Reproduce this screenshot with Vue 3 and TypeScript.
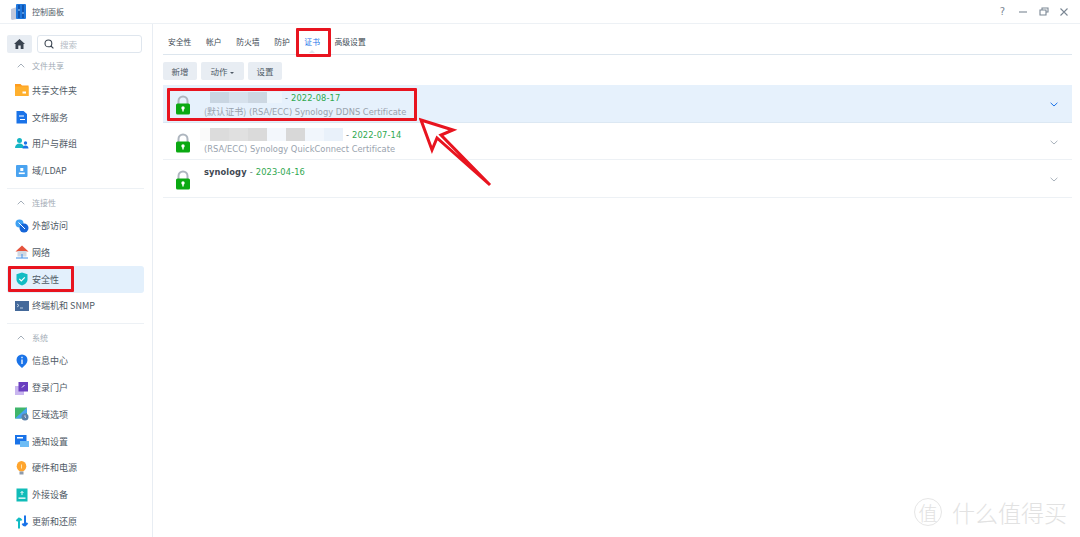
<script setup lang="ts">
type Item = { label: string; icon: string; active?: boolean }
type Group = { title: string; items: Item[] }
const groups: Group[] = [
  { title: '文件共享', items: [
    { label: '共享文件夹', icon: 'folder' }, { label: '文件服务', icon: 'file' },
    { label: '用户与群组', icon: 'users' }, { label: '域/LDAP', icon: 'ldap' } ] },
  { title: '连接性', items: [
    { label: '外部访问', icon: 'ext' }, { label: '网络', icon: 'net' },
    { label: '安全性', icon: 'shield', active: true }, { label: '终端机和 SNMP', icon: 'term' } ] },
  { title: '系统', items: [
    { label: '信息中心', icon: 'info' }, { label: '登录门户', icon: 'portal' },
    { label: '区域选项', icon: 'region' }, { label: '通知设置', icon: 'notify' },
    { label: '硬件和电源', icon: 'bulb' }, { label: '外接设备', icon: 'device' },
    { label: '更新和还原', icon: 'update' } ] },
]
const tabs = ['安全性', '帐户', '防火墙', '防护', '证书', '高级设置']
type Block = { w: number; c: string }
type Cert = { name?: string; date: string; tag?: string; sub?: string; blocks?: Block[]; active?: boolean }
const certs: Cert[] = [
  { date: '2022-08-17', tag: '(默认证书)', sub: ' (RSA/ECC) Synology DDNS Certificate', active: true,
    blocks: [{ w: 19, c: '#c9d6e2' }, { w: 19, c: '#d6e1ec' }, { w: 19, c: '#ccd7e2' }, { w: 15, c: '#edf5fc' }] },
  { date: '2022-07-14', sub: '(RSA/ECC) Synology QuickConnect Certificate',
    blocks: [{ w: 10, c: '#fafafa' }, { w: 19, c: '#dcdcdc' }, { w: 19, c: '#e0e0e0' }, { w: 19, c: '#dadada' }, { w: 19, c: '#f3f7fc' }, { w: 19, c: '#d8d8d8' }, { w: 19, c: '#f1f6fc' }, { w: 19, c: '#e9f1fa' }] },
  { name: 'synology', date: '2023-04-16' },
]
</script>

<template>
  <div class="app">
    <header class="titlebar">
      <div class="title">
        <svg class="logo" width="15" height="16" viewBox="0 0 15 16">
          <path d="M0 5l6-2v12l-5 1-1-1z" fill="#c3c9dc" />
          <rect x="5" y="0" width="10" height="15" rx="1" fill="#1f78de" />
          <path d="M8 1v13M12 1v13" stroke="#0e4ea8" stroke-width="1.6" />
          <path d="M7 6h2M11 9h2" stroke="#9fd4ff" stroke-width="1.2" />
        </svg>
        <span>控制面板</span>
      </div>
      <div class="winbtns">
        <span class="help">?</span>
        <svg width="10" height="10" viewBox="0 0 10 10"><path d="M1 5h8" stroke="#7b8794" stroke-width="1.1" /></svg>
        <svg width="10" height="10" viewBox="0 0 10 10"><path d="M3 3V1h6v4H7M1 3h6v5H1z" fill="none" stroke="#7b8794" stroke-width="1.1" /></svg>
        <svg width="10" height="10" viewBox="0 0 10 10"><path d="M1.5 1.500l7 7M8.500 1.500l-7 7" stroke="#7b8794" stroke-width="1.1" /></svg>
      </div>
    </header>

    <div class="body">
      <aside class="sidebar">
        <div class="searchrow">
          <div class="home">
            <svg width="11" height="10" viewBox="0 0 11 10"><path d="M5.500 0L11 5H9.500v5H6.700V6.600H4.300V10H1.500V5H0z" fill="#39434f" /></svg>
          </div>
          <div class="search">
            <svg width="10" height="10" viewBox="0 0 10 10"><circle cx="4.400" cy="4.400" r="3.400" fill="none" stroke="#39434f" stroke-width="1.100" /><path d="M7 7l2.400 2.400" stroke="#39434f" stroke-width="1.100" /></svg>
            <span>搜索</span>
          </div>
        </div>

        <section v-for="(g, gi) in groups" :key="g.title" class="group" :class="{ ruled: gi > 0 }">
          <div class="ghead">
            <svg width="8" height="5" viewBox="0 0 8 5"><path d="M.7 4.300L4 1l3.300 3.300" fill="none" stroke="#9aa5b1" stroke-width="0.900" /></svg>
            <span>{{ g.title }}</span>
          </div>
          <div v-for="it in g.items" :key="it.label" class="item" :class="{ active: it.active }">
            <svg class="ico" width="14" height="14" viewBox="0 0 14 14">
              <template v-if="it.icon === 'folder'">
                <path d="M0 1h5.500L7 2.500h6.500V13H0z" fill="#ff9d1e" /><path d="M0 3.500h13.500V13H0z" fill="#ffb02e" /><rect x="7.500" y="8.500" width="3.500" height="2" fill="#fff" />
              </template>
              <template v-else-if="it.icon === 'file'">
                <path d="M1.500 1h7L12 4v9.500H1.500z" fill="#1a73e8" /><path d="M4 6h5M5 9.500h5" stroke="#fff" stroke-width="1.200" />
              </template>
              <template v-else-if="it.icon === 'users'">
                <circle cx="4.500" cy="3.500" r="2.500" fill="#15b5c4" /><path d="M0 11c0-3 2-4.500 4.500-4.500S9 8 9 11z" fill="#15b5c4" /><circle cx="10.500" cy="6" r="1.700" fill="#1a73e8" /><path d="M7.500 11.500c0-2 1.300-3 3-3s3 1 3 3z" fill="#1a73e8" />
              </template>
              <template v-else-if="it.icon === 'ldap'">
                <rect x="1" y="1" width="11.500" height="12" rx="1" fill="#4aa3f0" /><rect x="5.300" y="4" width="3" height="3" fill="#fff" /><rect x="3.800" y="8.500" width="6" height="1.600" fill="#fff" />
              </template>
              <template v-else-if="it.icon === 'ext'">
                <circle cx="4.500" cy="4.500" r="4" fill="#3fa0f2" /><circle cx="9" cy="9" r="4.500" fill="#1565d8" /><path d="M3.500 3.500l6.500 6.500" stroke="#fff" stroke-width="1" />
              </template>
              <template v-else-if="it.icon === 'net'">
                <path d="M7 .5L13.500 6.500H.5z" fill="#e5533d" /><rect x="2.500" y="6" width="9" height="5.500" fill="#cfd8e3" /><path d="M1 13h12M7 9v4" stroke="#3f8ee8" stroke-width="1" />
              </template>
              <template v-else-if="it.icon === 'shield'">
                <path d="M7 .5l5.500 1.800v5c0 3.200-2.500 5.200-5.500 6.200-3-1-5.500-3-5.500-6.200v-5z" fill="#12bcc4" /><path d="M4.300 6.800l2 2 3.500-3.500" fill="none" stroke="#fff" stroke-width="1.200" />
              </template>
              <template v-else-if="it.icon === 'term'">
                <rect x="0" y="2" width="14" height="10" fill="#44699a" /><path d="M2 5l2 1.500L2 8M5 9h3" fill="none" stroke="#d6e4f2" stroke-width="0.800" />
              </template>
              <template v-else-if="it.icon === 'info'">
                <path d="M7 14C4 11.500 1.500 9 1.500 6a5.500 5.500 0 0 1 11 0c0 3-2.500 5.500-5.500 8z" fill="#1a73e8" /><path d="M7 2.800v1.400M7 5.500v4.500" stroke="#fff" stroke-width="1.300" />
              </template>
              <template v-else-if="it.icon === 'portal'">
                <rect x="0" y="5" width="9" height="9" fill="#c9b6ef" /><rect x="3.500" y="1" width="9.500" height="9.500" fill="#6a3fc0" /><path d="M7 6.500l2.500-2.500" stroke="#fff" stroke-width="1" />
              </template>
              <template v-else-if="it.icon === 'region'">
                <rect x="0" y="0.500" width="12" height="11" fill="#3fb56b" /><path d="M0 11.500L12 .5v5L6 11.500z" fill="#4aa3f0" /><circle cx="10" cy="10" r="3.500" fill="#5b7fa8" /><path d="M10 8.300V10l1 .8" fill="none" stroke="#fff" stroke-width="0.700" />
              </template>
              <template v-else-if="it.icon === 'notify'">
                <rect x="0" y="1" width="11.500" height="9.500" fill="#1a73e8" /><rect x="2" y="3" width="6" height="1.500" fill="#fff" /><rect x="5" y="7" width="9" height="6" fill="#6dbcf5" />
              </template>
              <template v-else-if="it.icon === 'bulb'">
                <ellipse cx="6.500" cy="5.300" rx="4.800" ry="5.200" fill="#ffa52e" /><rect x="4.500" y="10.500" width="4" height="3" fill="#8f9bab" /><path d="M6.500 3.500v4" stroke="#ffe2ad" stroke-width="1" />
              </template>
              <template v-else-if="it.icon === 'device'">
                <rect x="1.500" y="0.500" width="11" height="13" fill="#10bcb8" /><path d="M7 7V3.500M5.500 5L7 3.500 8.500 5" fill="none" stroke="#fff" stroke-width="0.900" /><rect x="3.500" y="9.500" width="7" height="1.300" fill="#fff" />
              </template>
              <template v-else-if="it.icon === 'update'">
                <path d="M4 13.500V3.500M1.500 6L4 3.500c1 0 2 1 2.500 2" fill="none" stroke="#12bcc4" stroke-width="2" /><path d="M10 .5v10M12.500 8L10 10.500C9 10.500 8 9.500 7.500 8.500" fill="none" stroke="#1a73e8" stroke-width="2" />
              </template>
            </svg>
            <span>{{ it.label }}</span>
          </div>
        </section>
      </aside>

      <main class="main">
        <nav class="tabs">
          <span v-for="t in tabs" :key="t" class="tab" :class="{ on: t === '证书' }">{{ t }}</span>
        </nav>
        <div class="toolbar">
          <button class="btn b1">新增</button>
          <button class="btn b2">动作 <i class="caret"></i></button>
          <button class="btn b3">设置</button>
        </div>
        <div class="list">
          <div v-for="c in certs" :key="c.date" class="row" :class="{ active: c.active }">
            <svg class="lock" width="16" height="20" viewBox="0 0 16 20">
              <path d="M3.500 9V6a4.500 4.500 0 0 1 9 0v3" fill="none" stroke="#aeb6bf" stroke-width="2" />
              <rect x="1" y="8.500" width="14" height="11" rx="1.500" fill="#0aa912" />
              <circle cx="8" cy="13" r="1.700" fill="#fff" /><rect x="7.300" y="13.500" width="1.400" height="3" fill="#fff" />
            </svg>
            <div class="info">
              <div class="line1">
                <span v-if="c.blocks" class="mosaic"><i v-for="(b, i) in c.blocks" :key="i" :style="{ width: b.w + 'px', background: b.c }"></i></span>
                <b v-if="c.name">{{ c.name }}</b>
                <span class="dash">-</span>
                <span class="date">{{ c.date }}</span>
              </div>
              <div v-if="c.sub" class="line2"><span v-if="c.tag" class="cjk">{{ c.tag }}</span>{{ c.sub }}</div>
            </div>
            <svg class="chev" width="8" height="5" viewBox="0 0 8 5"><path d="M.6.8L4 4l3.400-3.200" fill="none" :stroke="c.active ? '#1a73e8' : '#a9b2bc'" stroke-width="1" /></svg>
          </div>
        </div>
      </main>
    </div>

    <i class="mark m-side"></i>
    <i class="mark m-tab"></i>
    <i class="mark m-row"></i>
    <svg class="arrow" width="80" height="76" viewBox="0 0 80 76">
      <path d="M2 3L34 13 22 18 71 68 18 21 13 33z" fill="#fff" stroke="#e8141f" stroke-width="3" stroke-linejoin="miter" />
    </svg>
    <div class="watermark"><span class="seal">值</span><span class="wm">什么值得买</span></div>
  </div>
</template>

<style>
html, body { margin: 0; background: #fff; overflow: hidden; }
</style>

<style scoped>
.app {
  position: relative; width: 1080px; height: 537px; overflow: hidden; background: #fff;
  font-family: "DejaVu Sans", "Noto Sans CJK SC", sans-serif; font-size: 9px; color: #4f5a66;
}
.titlebar {
  height: 24px; box-sizing: border-box; border-bottom: 1px solid #edf1f5;
  display: flex; align-items: center; justify-content: space-between; padding: 0 11px 0 11px;
}
.title { display: flex; align-items: center; gap: 6px; font-family: "Noto Sans CJK SC", sans-serif; font-size: 8px; }
.logo { margin-top: 1px; }
.winbtns { display: flex; align-items: center; gap: 10.500px; }
.help { font-size: 10px; color: #7b8794; width: 10px; text-align: center; }
.body { display: flex; height: 513px; }
.sidebar { width: 153px; box-sizing: border-box; border-right: 1px solid #e8edf3; padding: 11px 8px 0 7px; flex: none; }
.searchrow { display: flex; gap: 5px; height: 18px; padding-right: 2px; }
.home { width: 25px; background: #e8edf3; border-radius: 2px; display: flex; align-items: center; justify-content: center; }
.search {
  flex: 1; box-sizing: border-box; border: 1px solid #dfe6ee; border-radius: 3px;
  display: flex; align-items: center; gap: 6px; padding-left: 6px; font-size: 8.500px;
  color: #b5bdc6; font-family: "Noto Sans CJK SC", sans-serif;
}
.group.ruled { border-top: 1px solid #edf1f5; margin-top: 4px; }
.ghead { height: 24px; display: flex; align-items: center; gap: 7px; padding-left: 10px; color: #a3acb6; font-family: "Noto Sans CJK SC", sans-serif; font-size: 8px; }
.group.ruled .ghead { height: 23px; box-sizing: border-box; padding-top: 3px; }
.item {
  height: 26.800px; display: flex; align-items: center; gap: 3px; padding-left: 8px; border-radius: 3px;
  font-size: 9px; color: #4f5a66; font-family: "Noto Sans CJK SC", "DejaVu Sans", sans-serif;
}
.item.active { background: #e3f0fc; }
.ico { flex: none; }
.main { flex: 1; padding: 0 8px 0 10px; min-width: 0; }
.tabs { height: 31px; box-sizing: border-box; border-bottom: 1px solid #dde6ee; display: flex; align-items: center; padding: 4px 0 0 5px; gap: 14.600px; }
.tab { position: relative; font-family: "Noto Sans CJK SC", sans-serif; font-size: 7.800px; color: #414b55; }
.tab.on { color: #1a73e8; }
.tab.on::after { content: ""; position: absolute; left: 50%; margin-left: -3px; bottom: -6px; border: 3px solid transparent; border-top: 0; border-bottom-color: #dde6ee; }
.toolbar { display: flex; gap: 4px; padding-top: 7px; height: 18px; }
.btn {
  height: 18px; border: 0; padding: 0; border-radius: 2px; background: #e8edf3; color: #4f5a66;
  font-family: "Noto Sans CJK SC", sans-serif; font-size: 8.500px;
}
.b1, .b3 { width: 34px; }
.b2 { width: 43px; }
.caret { display: inline-block; border: 2px solid transparent; border-top-color: #4f5a66; border-bottom: 0; vertical-align: middle; margin-left: 1px; }
.list { margin-top: 5px; }
.row {
  height: 38px; box-sizing: border-box; border-bottom: 1px solid #edf1f5; display: flex; align-items: flex-start;
  position: relative; padding-left: 12px;
}
.row + .row { height: 37px; }
.row:last-child { height: 38px; }
.row.active { background: #e6f1fc; border-bottom-color: #dce8f3; }
.lock { margin: 10px 13px 0 0; flex: none; }
.info { padding-top: 5px; }
.row.active .info { padding-top: 6px; }
.line1 { height: 14px; display: flex; align-items: center; font-size: 8.300px; letter-spacing: .1px; }
.mosaic { display: inline-flex; height: 11px; margin: -1px 3px 0 6px; }
.row:not(.active) .mosaic { height: 13px; margin-left: -4px; }
.mosaic i { flex: none; }
.line1 b { color: #3f4852; font-weight: 700; margin-right: 3px; }
.dash { color: #6d7883; margin-right: 3px; }
.date { color: #2fa84f; }
.line2 { color: #99a3ae; font-size: 8.300px; line-height: 14px; white-space: pre; letter-spacing: .03px; }
.cjk { font-family: "Noto Sans CJK SC", sans-serif; font-size: 9px; }
.chev { position: absolute; right: 14px; top: 17px; }
.mark { position: absolute; box-sizing: border-box; border: 3px solid #e8141f; border-radius: 1px; }
.m-side { left: 8px; top: 266px; width: 66px; height: 26px; }
.m-tab { left: 296px; top: 28px; width: 35px; height: 29px; }
.m-row { left: 167px; top: 88px; width: 250px; height: 33px; }
.arrow { position: absolute; left: 419px; top: 117px; }
.watermark { position: absolute; left: 914px; top: 498px; display: flex; align-items: center; gap: 10px; color: #e2e2e2; font-family: "Noto Sans CJK SC", sans-serif; font-weight: 300; }
.seal { width: 28px; height: 28px; box-sizing: border-box; border: 1px solid #e6e6e6; border-radius: 50%; display: flex; align-items: center; justify-content: center; font-size: 19px; }
.wm { font-size: 23px; line-height: 28px; }
</style>
